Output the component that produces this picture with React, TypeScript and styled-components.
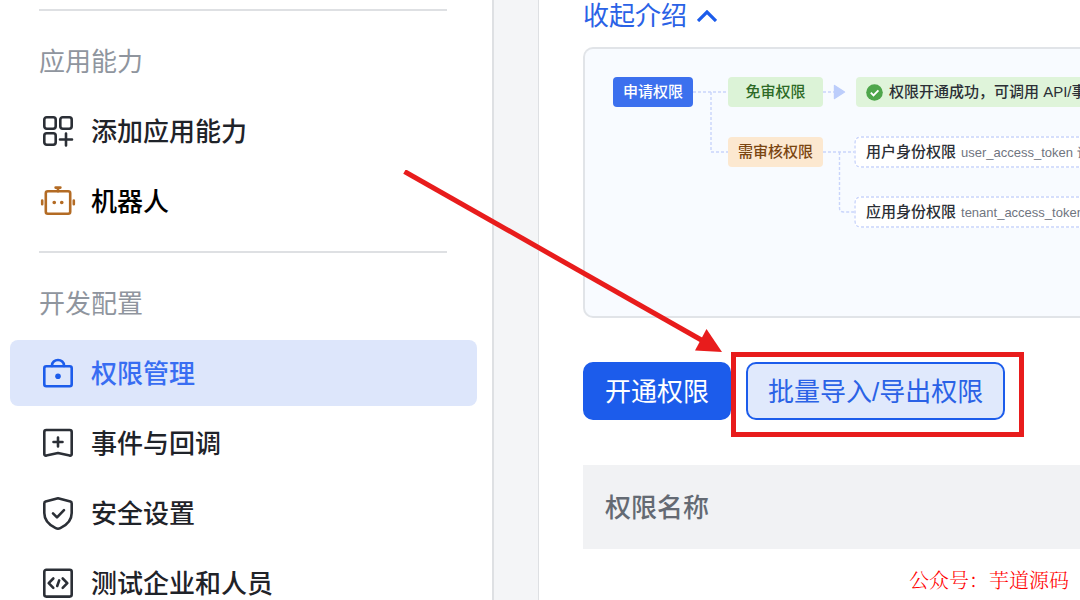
import React from "react";
import styled, { createGlobalStyle, css } from "styled-components";

const GlobalStyle = createGlobalStyle`
  *, *::before, *::after { box-sizing: border-box; }
  html, body { margin: 0; overflow: hidden; }
  body {
    background: #fff;
    color: #1f2329;
    font-family: "Liberation Sans", "Noto Sans CJK SC", sans-serif;
    font-size: 26px;
    line-height: 38px;
  }
  button { font: inherit; }
`;

const Page = styled.div`
  position: relative;
  display: flex;
  height: 100vh;
  overflow: hidden;
`;

/* ---------- sidebar ---------- */

const Sidebar = styled.nav`
  flex: 0 0 494px;
  padding: 9px 15px 0 10px;
  border-right: 2px solid #dee0e3;
`;

const Section = styled.section`
  margin-bottom: 17px;
`;

const SectionTitle = styled.h2`
  margin: 0 30px 17px 29px;
  padding-top: 32px;
  border-top: 2px solid #dee0e3;
  color: #8f959e;
  font-size: 26px;
  font-weight: 400;
  line-height: 38px;
`;

const MenuList = styled.ul`
  display: flex;
  flex-direction: column;
  gap: 4px;
  margin: 0;
  padding: 0;
  list-style: none;
`;

type Tone = "normal" | "strong" | "active";

const MenuLink = styled.a<{ $tone: Tone }>`
  display: flex;
  align-items: center;
  gap: 17px;
  height: 66px;
  padding-left: 30px;
  border-radius: 8px;
  color: ${({ $tone }) =>
    $tone === "active" ? "#386df2" : $tone === "strong" ? "#000" : "#1f2329"};
  background: ${({ $tone }) => ($tone === "active" ? "#dde6fb" : "transparent")};
  font-weight: 500;
  text-decoration: none;
`;

const MenuLabel = styled.span`
  padding-top: 2px;
`;

const MenuIcon = styled.svg<{ $color: string }>`
  flex: none;
  width: 34px;
  height: 34px;
  overflow: visible;
  fill: none;
  stroke: ${({ $color }) => $color};
  stroke-width: 2.6;
  stroke-linecap: round;
  stroke-linejoin: round;
`;

/* ---------- main column ---------- */

const Gutter = styled.div`
  flex: 0 0 44px;
  background: #f4f5f7;
`;

const Main = styled.main`
  flex: 1;
  min-width: 0;
  padding-left: 44px;
  border-left: 1px solid #dee0e3;
`;

const CollapseLink = styled.button`
  display: flex;
  align-items: center;
  gap: 10px;
  height: 32px;
  margin-bottom: 15px;
  padding: 0;
  border: 0;
  background: none;
  color: #2a62e6;
  font-weight: 400;
  line-height: 32px;
`;

const Chevron = styled.svg`
  width: 20px;
  height: 12px;
  fill: none;
  stroke: #1c5ceb;
  stroke-width: 3.2;
`;

const IntroPanel = styled.section`
  position: relative;
  height: 271px;
  margin-bottom: 44px;
  overflow: hidden;
  border: solid #e1e4e8;
  border-width: 2px 0 2px 2px;
  border-radius: 10px 0 0 10px;
  background: #f8fbff;
`;

const Wires = styled.svg`
  position: absolute;
  left: 0;
  top: 0;
  width: 300px;
  height: 200px;
  fill: none;
  stroke: #c9d5fb;
  stroke-width: 1.4;
  stroke-dasharray: 3 2;
`;

const nodeStyles = {
  start: css`
    width: 80px;
    background: #3c70ee;
    color: #fff;
  `,
  free: css`
    width: 95px;
    background: #dcf3d7;
    color: #2d6a26;
  `,
  review: css`
    width: 95px;
    background: #fce8d0;
    color: #7a4510;
  `,
  success: css`
    right: 0;
    justify-content: flex-start;
    padding-left: 10px;
    border-radius: 4px 0 0 4px;
    background: #dff4da;
    color: #2b2f36;
  `,
};

const FlowNode = styled.div<{ $kind: keyof typeof nodeStyles; $x: number; $y: number }>`
  position: absolute;
  left: ${({ $x }) => $x}px;
  top: ${({ $y }) => $y}px;
  display: flex;
  align-items: center;
  justify-content: center;
  gap: 6px;
  height: 30px;
  overflow: hidden;
  border-radius: 4px;
  font-size: 15px;
  font-weight: 500;
  line-height: 20px;
  white-space: nowrap;
  ${({ $kind }) => nodeStyles[$kind]}
`;

const CheckIcon = styled.svg`
  flex: none;
  width: 17px;
  height: 17px;
`;

const TokenNode = styled.div<{ $y: number }>`
  position: absolute;
  left: 269px;
  right: 0;
  top: ${({ $y }) => $y}px;
  height: 32px;
  display: flex;
  align-items: center;
  gap: 5px;
  padding-left: 12px;
  overflow: hidden;
  background: #fff;
  color: #2b2f36;
  border-radius: 6px 0 0 6px;
  font-size: 15px;
  font-weight: 500;
  line-height: 20px;
  white-space: nowrap;
`;

const TokenFrame = styled.svg`
  position: absolute;
  left: 0;
  top: 0;
  width: 100%;
  height: 32px;
  fill: none;
  stroke: #c9d5fb;
  stroke-width: 1.4;
  stroke-dasharray: 3 2;
`;

const TokenName = styled.span`
  padding-top: 2px;
  color: #70757f;
  font-size: 13px;
  font-weight: 400;
`;

const Actions = styled.div`
  display: flex;
  gap: 15px;
  margin-bottom: 45px;
`;

const ActionButton = styled.button<{ $primary?: boolean }>`
  height: 58px;
  padding: 2px 20px 0;
  border: 2px solid #1c5ceb;
  border-radius: 10px;
  background: ${({ $primary }) => ($primary ? "#1c5ceb" : "#e0e9fc")};
  color: ${({ $primary }) => ($primary ? "#fff" : "#2a62e6")};
  font-weight: 400;
  white-space: nowrap;
`;

const Highlighted = styled.div`
  position: relative;

  &::after {
    content: "";
    position: absolute;
    inset: -10px -19px -17px -15px;
    border: 5px solid #e81c1c;
    pointer-events: none;
  }
`;

const Arrow = styled.svg`
  position: absolute;
  left: -346px;
  top: -192px;
  width: 326px;
  height: 184px;
  pointer-events: none;
`;

const PermissionTable = styled.table`
  width: 100%;
  border-collapse: collapse;

  th {
    height: 84px;
    padding: 2px 22px 0;
    background: #f1f2f4;
    color: #646a73;
    font-weight: 500;
    text-align: left;
  }
`;

const Watermark = styled.p`
  position: absolute;
  right: 11px;
  bottom: 5px;
  margin: 0;
  color: #f00;
  font-family: "Liberation Serif", "Noto Serif CJK SC", "Noto Sans CJK SC", serif;
  font-size: 20px;
  font-weight: 300;
  line-height: 28px;
`;

const INK = "#2b2f36";

type Item = { label: string; tone: Tone; color: string; drawing: React.ReactNode };

const sections: { title: string; items: Item[] }[] = [
  {
    title: "应用能力",
    items: [
      {
        label: "添加应用能力",
        tone: "normal",
        color: INK,
        drawing: (
          <>
            <rect x="4.3" y="3.3" width="11.4" height="11.4" rx="2.4" />
            <rect x="20.3" y="3.3" width="11.4" height="11.4" rx="2.4" />
            <rect x="4.3" y="19.3" width="11.4" height="11.4" rx="2.4" />
            <path d="M26 19.5v12M20 25.5h12" />
          </>
        ),
      },
      {
        label: "机器人",
        tone: "strong",
        color: "#b36b24",
        drawing: (
          <>
            <rect x="5.8" y="7.3" width="24.4" height="22.4" rx="2" />
            <path d="M15.6 3.6h4.8M18 3.6v3.6M2.2 16.6v3.6M33.8 16.6v3.6" />
            <path d="M14.2 18.5h.1M21.7 18.5h.1" strokeWidth="3.6" />
          </>
        ),
      },
    ],
  },
  {
    title: "开发配置",
    items: [
      {
        label: "权限管理",
        tone: "active",
        color: "#1c5ceb",
        drawing: (
          <>
            <rect x="4.3" y="10.3" width="27.4" height="20" rx="2" />
            <path d="M12 10V9.4a6 5.4 0 0 1 12 0v.6" />
            <circle cx="18" cy="20.2" r="2.8" fill="#1c5ceb" stroke="none" />
          </>
        ),
      },
      {
        label: "事件与回调",
        tone: "normal",
        color: INK,
        drawing: (
          <>
            <path d="M4.3 6a2 2 0 0 1 2-2h23.4a2 2 0 0 1 2 2v22.2a1.4 1.4 0 0 1-2 1.3L18 27l-11.7 2.5a1.4 1.4 0 0 1-2-1.3Z" />
            <path d="M18 11.5v9M13.5 16h9" />
          </>
        ),
      },
      {
        label: "安全设置",
        tone: "normal",
        color: INK,
        drawing: (
          <>
            <path d="M18 2.2 30.4 5.6Q31.7 6 31.7 7.4V17c0 7-5.2 12.2-11.4 15.2q-2.3 1.1-4.6 0C9.5 29.2 4.3 24 4.3 17V7.4Q4.3 6 5.6 5.6Z" />
            <path d="m13 17.3 4 4 7-7.2" />
          </>
        ),
      },
      {
        label: "测试企业和人员",
        tone: "normal",
        color: INK,
        drawing: (
          <>
            <rect x="4.3" y="3.8" width="27.4" height="26.8" rx="2" />
            <path d="m13.3 12.5-4.6 4.7 4.6 4.7M22.7 12.5l4.6 4.7-4.6 4.7M19.2 14.4l-2 5.6" />
          </>
        ),
      },
    ],
  },
];

export default function App() {
  return (
    <Page>
      <GlobalStyle />
      <Sidebar>
        {sections.map((section) => (
          <Section key={section.title}>
            <SectionTitle>{section.title}</SectionTitle>
            <MenuList>
              {section.items.map((item) => (
                <li key={item.label}>
                  <MenuLink
                    href="#"
                    $tone={item.tone}
                    aria-current={item.tone === "active" ? "page" : undefined}
                  >
                    <MenuIcon viewBox="0 0 34 34" $color={item.color} aria-hidden="true">
                      {item.drawing}
                    </MenuIcon>
                    <MenuLabel>{item.label}</MenuLabel>
                  </MenuLink>
                </li>
              ))}
            </MenuList>
          </Section>
        ))}
      </Sidebar>
      <Gutter />
      <Main>
        <CollapseLink type="button">
          收起介绍
          <Chevron viewBox="0 0 20 12" aria-hidden="true">
            <path d="M1 11 10 2l9 9" />
          </Chevron>
        </CollapseLink>

        <IntroPanel>
          <Wires viewBox="0 0 300 200" aria-hidden="true">
            <path d="M108 43h36M126 43v60M126 103h18M238 43h11" />
            <path d="M238 103h32M254.5 103v56q0 4 4 4h12" />
            <path
              d="M249.5 36.5 259.5 43 249.5 49.5Z"
              fill="#bccdfb"
              stroke="#bccdfb"
              strokeDasharray="none"
              strokeLinejoin="round"
            />
          </Wires>
          <FlowNode $kind="start" $x={28} $y={28}>申请权限</FlowNode>
          <FlowNode $kind="free" $x={143} $y={28}>免审权限</FlowNode>
          <FlowNode $kind="review" $x={143} $y={88}>需审核权限</FlowNode>
          <FlowNode $kind="success" $x={271} $y={28}>
            <CheckIcon viewBox="0 0 17 17" aria-hidden="true">
              <circle cx="8.5" cy="8.5" r="8.3" fill="#4ea64b" />
              <path d="m4.8 8.7 2.7 2.7 4.9-5" fill="none" stroke="#fff" strokeWidth="1.9" />
            </CheckIcon>
            权限开通成功，可调用 API/事
          </FlowNode>
          <TokenNode $y={87}>
            <TokenFrame aria-hidden="true">
              <path d="M1000 1H7Q1 1 1 7V25Q1 31 7 31H1000" />
            </TokenFrame>
            用户身份权限 <TokenName>user_access_token 访</TokenName>
          </TokenNode>
          <TokenNode $y={147}>
            <TokenFrame aria-hidden="true">
              <path d="M1000 1H7Q1 1 1 7V25Q1 31 7 31H1000" />
            </TokenFrame>
            应用身份权限 <TokenName>tenant_access_token</TokenName>
          </TokenNode>
        </IntroPanel>

        <Actions>
          <ActionButton type="button" $primary>开通权限</ActionButton>
          <Highlighted>
            <ActionButton type="button">批量导入/导出权限</ActionButton>
            <Arrow viewBox="400 170 326 184" aria-hidden="true">
              <path d="M404.5 171.5 704 341.5" stroke="#e81c1c" strokeWidth="5" />
              <path d="M722 352 706.5 329 695 350.5Z" fill="#e81c1c" />
            </Arrow>
          </Highlighted>
        </Actions>

        <PermissionTable>
          <thead>
            <tr>
              <th scope="col">权限名称</th>
            </tr>
          </thead>
        </PermissionTable>
      </Main>
      <Watermark>公众号：芋道源码</Watermark>
    </Page>
  );
}
